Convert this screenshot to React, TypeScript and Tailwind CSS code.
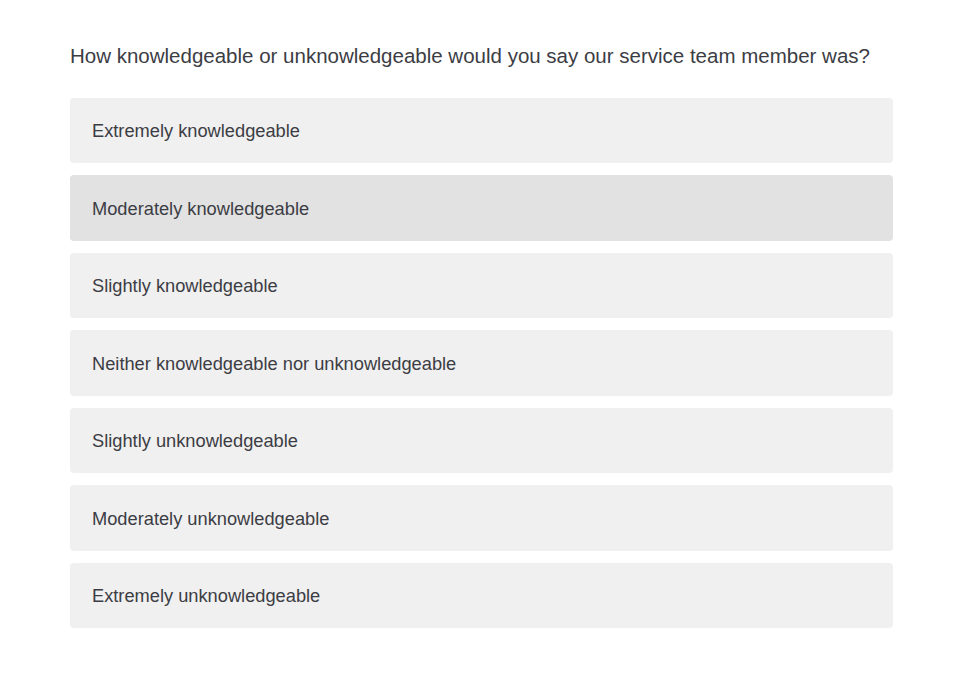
const options = [
  "Extremely knowledgeable",
  "Moderately knowledgeable",
  "Slightly knowledgeable",
  "Neither knowledgeable nor unknowledgeable",
  "Slightly unknowledgeable",
  "Moderately unknowledgeable",
  "Extremely unknowledgeable",
];

export default function App() {
  return (
    <div className="min-h-screen bg-white pt-[43px] pl-[70px] font-['Liberation_Sans',Arial,sans-serif] text-[#3c3d44]">
      <div className="w-[823px]">
        <h1 className="text-[20.5px] leading-[26px] mb-[28.5px]">
          How knowledgeable or unknowledgeable would you say our service team member was?
        </h1>
        <div className="flex flex-col gap-[12px]">
          {options.map((o, i) => (
            <div
              key={o}
              className={`h-[65.5px] flex items-center pl-[22px] pt-[1px] rounded-[4px] text-[18.25px] ${
                i === 1 ? "bg-[#e2e2e2]" : "bg-[#f0f0f0]"
              }`}
            >
              {o}
            </div>
          ))}
        </div>
      </div>
    </div>
  );
}
